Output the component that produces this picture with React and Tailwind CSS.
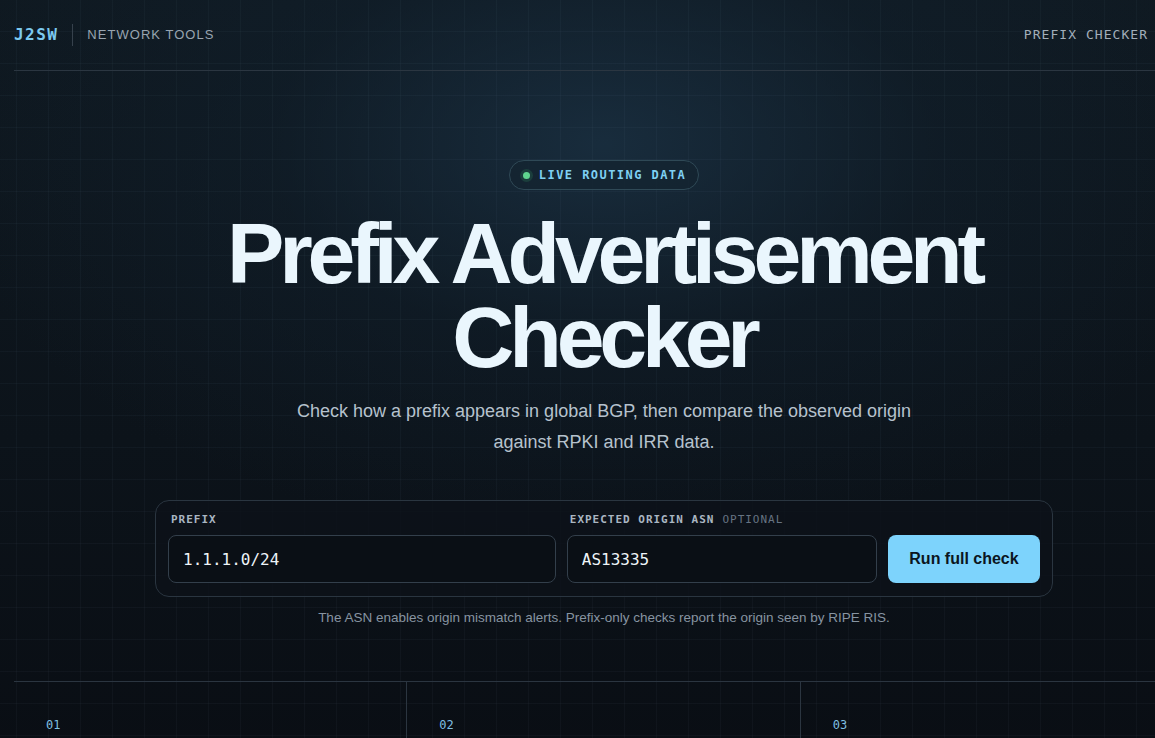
import React, { useState } from 'react'

const mono = "font-['DejaVu_Sans_Mono','Liberation_Mono',monospace]"
const sans = "font-['Liberation_Sans',Arial,sans-serif]"

function Field({ label, optional, value, onChange }) {
  return (
    <label className="flex flex-col">
      <span className={`${mono} ml-[3px] mb-[7px] text-[11px] leading-[16px] tracking-[0.09em] font-bold text-[#aab6c2]`}>
        {label}
        {optional && <span className="ml-[8px] font-normal text-[#667382]">OPTIONAL</span>}
      </span>
      <input
        value={value}
        onChange={e => onChange(e.target.value)}
        className={`${mono} h-[48px] w-full rounded-lg border border-[#333f4b] bg-[#0a0f15] px-[14px] text-[16px] text-[#eef4f8] outline-none`}
      />
    </label>
  )
}

export default function App() {
  const [prefix, setPrefix] = useState('1.1.1.0/24')
  const [asn, setAsn] = useState('AS13335')

  const steps = ['01', '02', '03']

  return (
    <div className="min-h-screen w-full overflow-hidden bg-[#0a0f15]">
      <div className="w-[1208px] px-[14px] [background-color:#0a0f15] [background-image:linear-gradient(rgba(140,175,205,0.045)_1px,transparent_1px),linear-gradient(90deg,rgba(140,175,205,0.045)_1px,transparent_1px),radial-gradient(ellipse_55%_50%_at_50%_18%,rgba(26,48,66,0.85)_0%,rgba(18,34,48,0.4)_50%,transparent_100%),linear-gradient(180deg,#0f1921_0%,#0c131a_55%,#090d13_100%)] [background-size:32px_32px,32px_32px,100%_100%,100%_100%] [background-position:16px_31px,16px_31px,0_0,0_0]">
        {/* top bar */}
        <header className="flex h-[71px] items-center justify-between border-b border-[#2b3641]">
          <div className="flex items-center">
            <span className={`${mono} text-[16px] leading-[20px] font-bold tracking-[0.09em] text-[#7cc9ef]`}>J2SW</span>
            <span className="mx-[14px] h-[22px] w-px bg-[#36414c]" />
            <span className={`${sans} text-[13px] leading-[20px] tracking-[0.08em] text-[#98a4b0]`}>NETWORK TOOLS</span>
          </div>
          <nav className="pr-[46px] pb-[4px]">
            <span className={`${mono} text-[13px] leading-[16px] tracking-[0.08em] text-[#a2aeba]`}>PREFIX CHECKER</span>
          </nav>
        </header>

        <main className={sans}>
          <section className="flex flex-col items-center pt-[89px]">
            <div className="flex h-[30px] items-center gap-[9px] rounded-full border border-[#2f4956] bg-[#142431]/80 pl-[13px] pr-[12px]">
              <span className="h-[7px] w-[7px] rounded-full bg-[#5fd68f] shadow-[0_0_0_3px_rgba(74,222,128,0.14)]" />
              <span className={`${mono} text-[12px] font-bold tracking-[0.12em] text-[#7fd0f3]`}>LIVE ROUTING DATA</span>
            </div>

            <h1 className="mt-[21px] text-center text-[86px] font-bold leading-[84px] tracking-[-0.06em] text-[#eaf6fd]">
              Prefix Advertisement
              <br />
              Checker
            </h1>

            <p className="mt-[17px] max-w-[640px] text-center text-[18px] leading-[31px] text-[#b6c2cd]">
              Check how a prefix appears in global BGP, then compare the observed origin against RPKI and IRR data.
            </p>

            <form
              onSubmit={e => e.preventDefault()}
              className="mt-[42px] grid w-[898px] grid-cols-[1.25fr_1fr_152px] items-end gap-x-[11px] rounded-[14px] border border-[#2a3540] bg-[#0c1219]/80 px-[12px] pt-[11px] pb-[13px]"
            >
              <Field label="PREFIX" value={prefix} onChange={setPrefix} />
              <Field label="EXPECTED ORIGIN ASN" optional value={asn} onChange={setAsn} />
              <button className="h-[48px] rounded-lg bg-[#7dd3fc] text-[16px] font-bold text-[#0b1520]">
                Run full check
              </button>
            </form>

            <p className="mt-[11px] text-[13.5px] leading-[20px] text-[#8794a1]">
              The ASN enables origin mismatch alerts. Prefix-only checks report the origin seen by RIPE RIS.
            </p>
          </section>

          {/* how it works */}
          <section className="mt-[53px] grid grid-cols-3 border-t border-[#2b3540]">
            {steps.map((n, i) => (
              <div key={n} className={`h-[120px] px-[32px] pt-[30px] ${i < 2 ? 'border-r border-[#2b3540]' : ''}`}>
                <span className={`${mono} text-[12px] leading-[16px] text-[#7fbfe0]`}>{n}</span>
              </div>
            ))}
          </section>
        </main>
      </div>
    </div>
  )
}
